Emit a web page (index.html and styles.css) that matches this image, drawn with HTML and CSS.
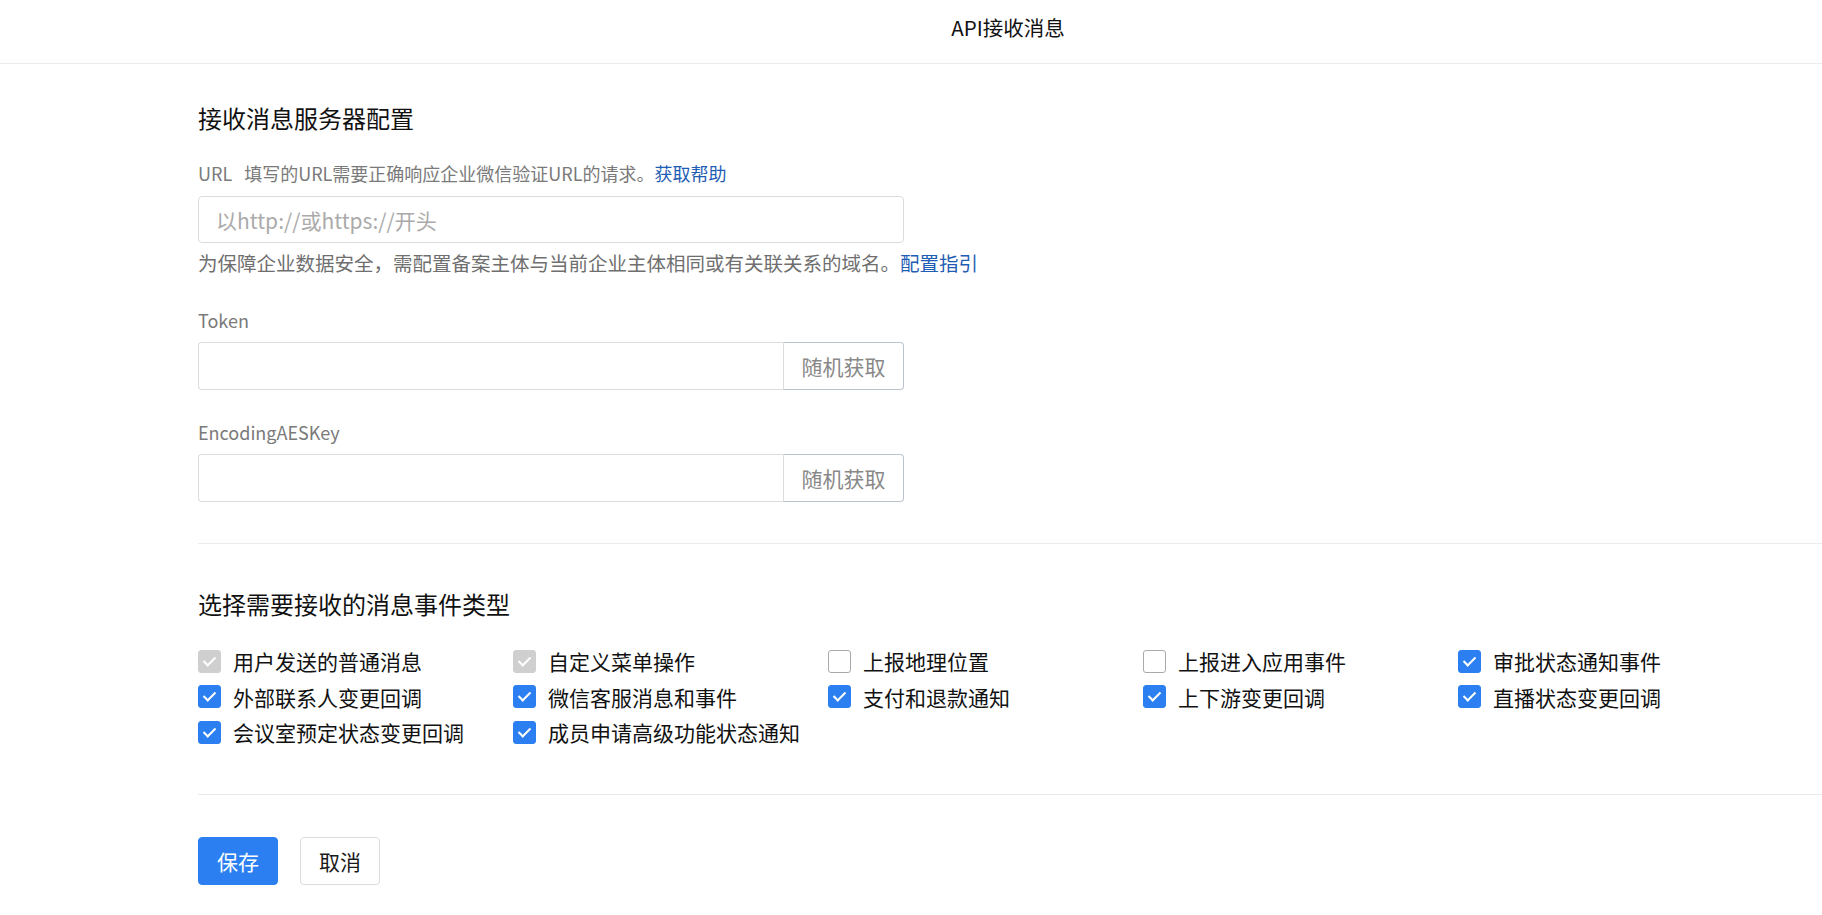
FILE: index.html
```html
<!DOCTYPE html>
<html lang="zh-CN">
<head>
  <meta charset="UTF-8">
  <meta name="viewport" content="width=device-width, initial-scale=1.0">
  <title>API接收消息</title>
  <link rel="stylesheet" href="styles.css">
</head>
<body>
  <div class="header">API接收消息</div>

  <div class="main">
    <h2 class="section-title">接收消息服务器配置</h2>

    <div class="field-label">URL<span class="gap"></span>填写的URL需要正确响应企业微信验证URL的请求。<a href="#">获取帮助</a></div>
    <input type="text" class="text-input" placeholder="以http://或https://开头">
    <div class="hint">为保障企业数据安全，需配置备案主体与当前企业主体相同或有关联关系的域名。<a href="#">配置指引</a></div>

    <div class="field-label spaced">Token</div>
    <div class="input-group">
      <input type="text" class="text-input">
      <button class="addon-btn">随机获取</button>
    </div>

    <div class="field-label spaced tight">EncodingAESKey</div>
    <div class="input-group">
      <input type="text" class="text-input">
      <button class="addon-btn">随机获取</button>
    </div>

    <hr class="divider">

    <h2 class="section-title">选择需要接收的消息事件类型</h2>

    <div class="event-grid">
      <label class="event"><span class="cb disabled"></span>用户发送的普通消息</label>
      <label class="event"><span class="cb disabled"></span>自定义菜单操作</label>
      <label class="event"><span class="cb"></span>上报地理位置</label>
      <label class="event"><span class="cb"></span>上报进入应用事件</label>
      <label class="event"><span class="cb checked"></span>审批状态通知事件</label>
      <label class="event"><span class="cb checked"></span>外部联系人变更回调</label>
      <label class="event"><span class="cb checked"></span>微信客服消息和事件</label>
      <label class="event"><span class="cb checked"></span>支付和退款通知</label>
      <label class="event"><span class="cb checked"></span>上下游变更回调</label>
      <label class="event"><span class="cb checked"></span>直播状态变更回调</label>
      <label class="event"><span class="cb checked"></span>会议室预定状态变更回调</label>
      <label class="event"><span class="cb checked"></span>成员申请高级功能状态通知</label>
    </div>

    <hr class="divider bottom">

    <div class="actions">
      <button class="btn primary">保存</button>
      <button class="btn">取消</button>
    </div>
  </div>
</body>
</html>
```

FILE: styles.css
```css
body { margin: 0; font-family: "Noto Sans CJK SC", "Noto Sans", sans-serif; background: #fff; color: #1a1a1a; }
.header { height: 63px; line-height: 54px; border-bottom: 1px solid #ebebeb; text-align: center; padding-left: 194px; font-size: 20.5px; color: #111; }
.main { padding: 38px 0 0 198px; }
.section-title { margin: 0; font-size: 24px; line-height: 32px; font-weight: normal; color: #111; }
.field-label { margin-top: 26px; font-size: 18px; line-height: 26px; color: #7a7a7a; }
.field-label.spaced { margin-top: 31px; }
.field-label.spaced.tight { margin-top: 29px; }
.field-label .gap { display: inline-block; width: 12px; }
.field-label a, .hint a { color: #1f5db4; text-decoration: none; }
.text-input { display: block; box-sizing: border-box; width: 706px; height: 47px; margin-top: 10px; padding: 0 17px; border: 1px solid #dcdcdc; border-radius: 4px; font-family: inherit; font-size: 21px; color: #333; outline: none; }
.text-input::placeholder { color: #aaa; }
.hint { margin-top: 7px; font-size: 19.5px; line-height: 26px; color: #6f6f6f; }
.input-group { display: flex; width: 706px; margin-top: 9px; }
.input-group .text-input { flex: 1; width: auto; height: 48px; margin: 0; border-radius: 4px 0 0 4px; border-right: none; }
.addon-btn { width: 121px; height: 48px; border: 1px solid #b9c3ce; border-left-color: #dcdcdc; border-radius: 0 4px 4px 0; background: #fff; font-family: inherit; font-size: 21px; color: #888; cursor: pointer; }
.divider { margin: 41px 0 0 0; border: none; border-top: 1px solid #ebebeb; }
.divider + .section-title { margin-top: 44px; }
.divider.bottom { margin-top: 46.5px; }
.event-grid { display: grid; grid-template-columns: repeat(5, 315px); row-gap: 5.5px; margin-top: 26px; }
.event { display: flex; align-items: center; height: 30px; font-size: 21px; color: #111; cursor: pointer; }
.cb { position: relative; box-sizing: border-box; width: 23px; height: 23px; margin-right: 12px; border: 1px solid #aaa; border-radius: 3px; background: #fff; flex-shrink: 0; }
.cb.checked { background: #2b7ff0; border-color: #2b7ff0; }
.cb.disabled { background: #cfcfcf; border-color: #cfcfcf; }
.cb.checked::after, .cb.disabled::after { content: ''; position: absolute; left: 7px; top: 3px; width: 5px; height: 10px; border: solid #fff; border-width: 0 2.5px 2.5px 0; transform: rotate(45deg); }
.actions { display: flex; gap: 22px; margin-top: 42px; padding-bottom: 30px; }
.btn { width: 80px; height: 48px; border: 1px solid #dcdcdc; border-radius: 4px; background: #fff; font-family: inherit; font-size: 21px; color: #1a1a1a; cursor: pointer; }
.btn.primary { background: #2b7ff0; border-color: #2b7ff0; color: #fff; }
```
